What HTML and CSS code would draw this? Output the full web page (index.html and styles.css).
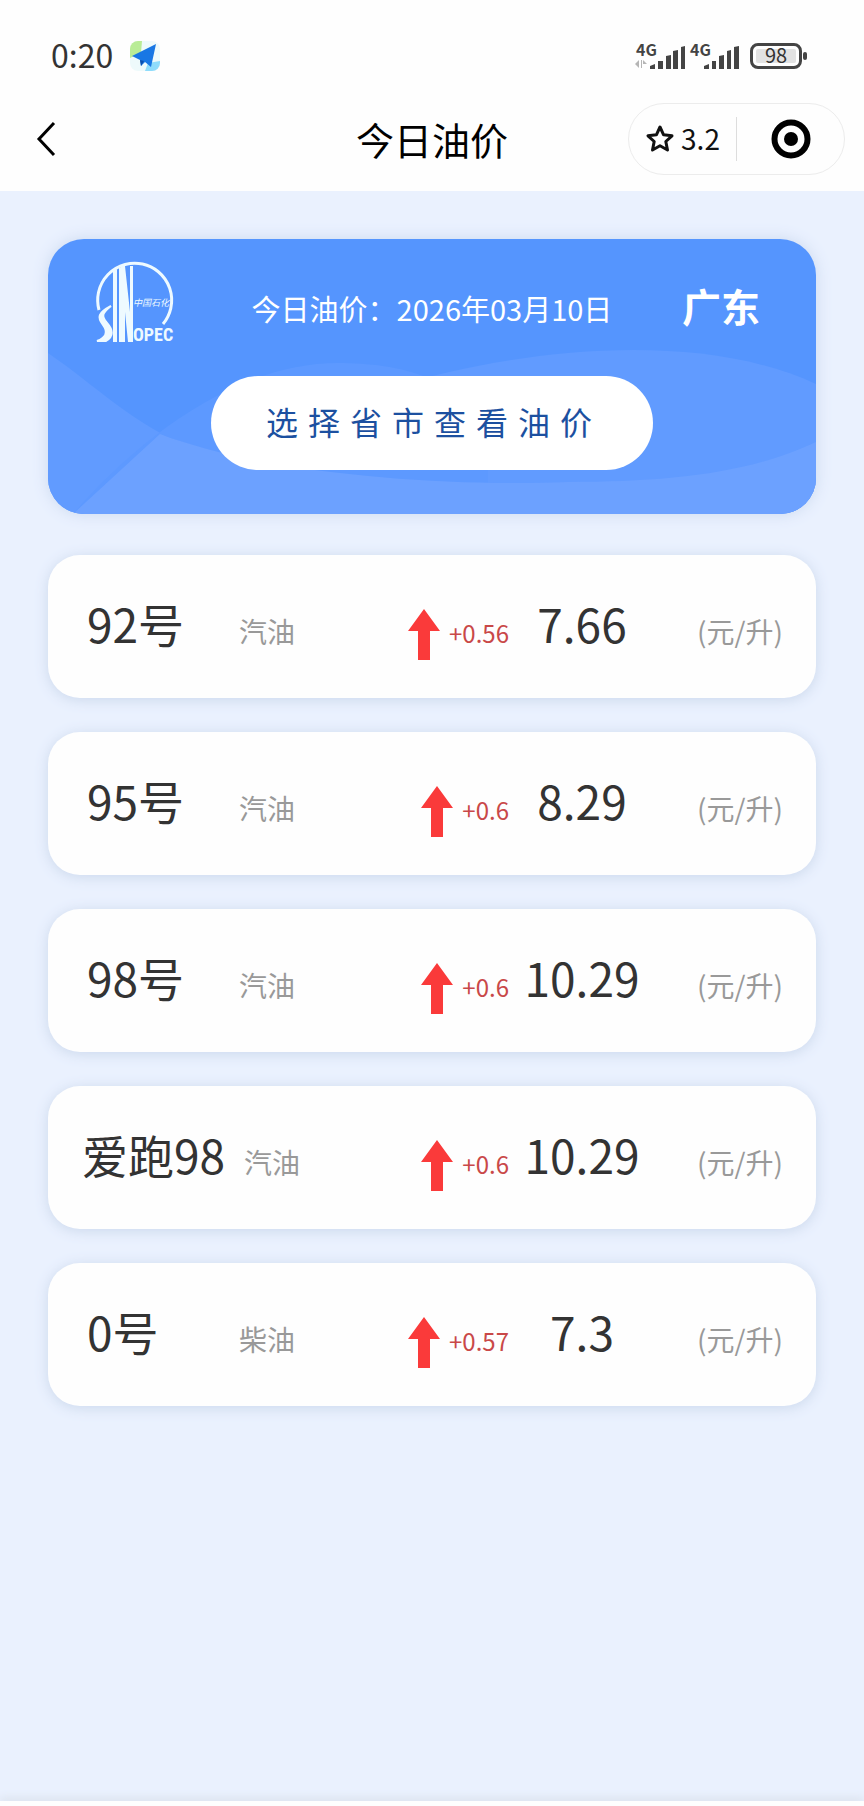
FILE: index.html
```html
<!DOCTYPE html>
<html lang="zh-CN">
<head>
<meta charset="utf-8">
<meta name="viewport" content="width=device-width, initial-scale=1">
<title>今日油价</title>
<link rel="stylesheet" href="styles.css">
</head>
<body>
<header class="top">
  <div class="status">
    <div class="status-left">
      <span class="clock">0:20</span>
      <svg class="app-icon" viewBox="0 0 32 32" aria-hidden="true">
        <rect x="1" y="1" width="30" height="30" rx="8" fill="#eefafb"/>
        <path d="M9 1h4L12 13 1 18V9a8 8 0 0 1 8-8z" fill="#b9ec96"/>
        <path d="M16 31l3-8 12-2v2a8 8 0 0 1-8 8z" fill="#8fdcfb"/>
        <path d="M27 4L3 16l8 4 1 6 4-4 6 5z" fill="#1877e4"/>
        <path d="M11 20l1 6 3-5z" fill="#0b4fae"/>
      </svg>
    </div>
    <div class="status-right">
      <svg class="signal" viewBox="0 0 52 30" aria-label="4G">
        <text x="1" y="15" class="net">4G</text>
        <path d="M4 19v8l-4-4zM6 19h1v8h-1zM8 19l4 4h-4z" fill="#b5b5b5"/>
        <path d="M15 28v-3l5-2v5zM23 20h5v8h-5zM31 15l5-1v14h-5zM38 10l5-1v19h-5zM46 6l4-1v23h-4z" fill="#444"/>
      </svg>
      <svg class="signal" viewBox="0 0 52 30" aria-label="4G">
        <text x="1" y="15" class="net">4G</text>
        <path d="M15 28v-3l5-2v5zM23 20h4v8h-4zM30 15l5-1v14h-5zM38 10l4-1v19h-4zM45 6l5-1v23h-5z" fill="#444"/>
      </svg>
      <span class="battery"><span class="battery-level">98</span></span>
    </div>
  </div>
  <nav class="nav">
    <button class="back" type="button" aria-label="返回">
      <svg viewBox="0 0 20 36"><path d="M18 2L3 18l15 16" fill="none" stroke="#000" stroke-width="3"/></svg>
    </button>
    <h1 class="title">今日油价</h1>
    <div class="capsule">
      <button class="rate" type="button">
        <svg viewBox="0 0 30 30" aria-hidden="true"><path d="M15 3l3.600 7.800 8.400 1-6.200 5.700 1.700 8.500L15 21.800 7.500 26l1.700-8.500L3 11.800l8.400-1z" fill="none" stroke="#111" stroke-width="3" stroke-linejoin="round"/></svg>
        <span>3.2</span>
      </button>
      <button class="close" type="button" aria-label="关闭">
        <svg viewBox="0 0 40 40"><circle cx="20" cy="20" r="16.500" fill="none" stroke="#000" stroke-width="6"/><circle cx="20" cy="20" r="7" fill="#000"/></svg>
      </button>
    </div>
  </nav>
</header>

<main class="content">
  <section class="hero">
    <svg class="hero-waves" viewBox="0 0 768 275" preserveAspectRatio="none" aria-hidden="true">
      <path d="M0 114C50 148 82 184 150 212C260 252 420 252 520 246C620 246 710 232 768 202V275H0z" fill="#619bff"/>
      <path d="M345 148C470 110 650 90 768 145V203C700 236 610 246 520 246H345z" fill="#619bff"/>
      <path d="M25 275C85 205 185 124 290 124C350 124 420 138 440 200V246C330 240 220 236 112 195z" fill="#5d99ff"/>
      <path d="M25 275L112 195C220 236 400 248 520 243C620 243 700 235 768 203V275z" fill="#6ca1ff"/>
    </svg>
    <div class="hero-head">
      <svg class="logo" viewBox="0 0 78 82" role="img" aria-label="中国石化 SINOPEC">
        <path d="M3 48A37 37 0 1 1 67 62" fill="none" stroke="#eefaff" stroke-width="3"/>
        <path d="M17 9l4-2v73h-4zM23 6l4-2v76h-4z" fill="#eefaff"/>
        <path d="M29 4l5 46V4h3v76h-5l-3-30v30h-2V4z" fill="#eefaff"/>
        <path d="M15 44C2 51 1 55 7 63S9 76 1 79h9c8-5 7-11 1-18S6 51 15 44z" fill="#eefaff" stroke="#eefaff" stroke-width="2"/>
        <text x="37" y="44" class="logo-cn">中国石化</text>
        <text x="37" y="79" class="logo-en">OPEC</text>
      </svg>
      <p class="date">今日油价：2026年03月10日</p>
      <strong class="province">广东</strong>
    </div>
    <button class="pick" type="button">选择省市查看油价</button>
  </section>

  <ul class="prices">
    <li class="row">
      <span class="fuel">92号</span><span class="kind">汽油</span>
      <span class="change"><svg class="arrow" viewBox="0 0 32 51" aria-hidden="true"><path d="M16 0l16 22H22v29H10V22H0z"/></svg>+0.56</span>
      <span class="price">7.66</span><span class="unit">(元/升)</span>
    </li>
    <li class="row">
      <span class="fuel">95号</span><span class="kind">汽油</span>
      <span class="change"><svg class="arrow" viewBox="0 0 32 51" aria-hidden="true"><path d="M16 0l16 22H22v29H10V22H0z"/></svg>+0.6</span>
      <span class="price">8.29</span><span class="unit">(元/升)</span>
    </li>
    <li class="row">
      <span class="fuel">98号</span><span class="kind">汽油</span>
      <span class="change"><svg class="arrow" viewBox="0 0 32 51" aria-hidden="true"><path d="M16 0l16 22H22v29H10V22H0z"/></svg>+0.6</span>
      <span class="price">10.29</span><span class="unit">(元/升)</span>
    </li>
    <li class="row">
      <span class="fuel fuel-long">爱跑98</span><span class="kind">汽油</span>
      <span class="change"><svg class="arrow" viewBox="0 0 32 51" aria-hidden="true"><path d="M16 0l16 22H22v29H10V22H0z"/></svg>+0.6</span>
      <span class="price">10.29</span><span class="unit">(元/升)</span>
    </li>
    <li class="row">
      <span class="fuel">0号</span><span class="kind">柴油</span>
      <span class="change"><svg class="arrow" viewBox="0 0 32 51" aria-hidden="true"><path d="M16 0l16 22H22v29H10V22H0z"/></svg>+0.57</span>
      <span class="price">7.3</span><span class="unit">(元/升)</span>
    </li>
  </ul>
</main>
<footer class="sheet"></footer>
</body>
</html>
```

FILE: styles.css
```css
* {
  box-sizing: border-box;
}

body {
  margin: 0;
  min-height: 100vh;
  display: flex;
  flex-direction: column;
  background: #eaf1fe;
  color: #333;
  font-family: "Noto Sans CJK SC", "Noto Sans", sans-serif;
}

button {
  border: 0;
  padding: 0;
  background: none;
  color: inherit;
  font: inherit;
  cursor: pointer;
}

svg {
  display: block;
}

.top {
  background: #fefefe;
}

.status {
  display: flex;
  justify-content: space-between;
  align-items: center;
  height: 87px;
  padding: 24px 56px 0 51px;
}

.status-left,
.status-right {
  display: flex;
  align-items: center;
}

.status-left {
  gap: 16px;
}

.clock {
  padding-bottom: 4px;
  font-size: 32px;
  line-height: 32px;
  color: #333;
}

.app-icon {
  width: 32px;
  height: 32px;
}

.signal {
  width: 52px;
  height: 30px;
  margin-right: 2px;
  overflow: visible;
}

.net {
  font: 700 16px "Noto Sans CJK SC", sans-serif;
  fill: #444;
}

.battery {
  position: relative;
  display: flex;
  width: 52px;
  height: 26px;
  margin: 0 6px 0 7px;
  padding: 3px;
  border: 3px solid #444;
  border-radius: 8px;
}

.battery::after {
  content: "";
  position: absolute;
  right: -8px;
  top: 6px;
  width: 4px;
  height: 8px;
  border-radius: 2px;
  background: #444;
}

.battery-level {
  flex: 1;
  border-radius: 2px;
  background: #e2e2e2;
  font-size: 20px;
  line-height: 12px;
  text-align: center;
}

.nav {
  display: grid;
  grid-template-columns: 1fr auto 1fr;
  align-items: center;
  height: 104px;
  padding: 0 19px;
}

.back {
  justify-self: start;
  padding-left: 17px;
}

.back svg {
  width: 20px;
  height: 36px;
}

.title {
  margin: 0;
  font-size: 38px;
  line-height: 48px;
  font-weight: 400;
  color: #000;
}

.capsule {
  justify-self: end;
  display: flex;
  align-items: center;
  width: 217px;
  height: 72px;
  border: 1px solid #ececec;
  border-radius: 36px;
}

.rate,
.close {
  flex: 1;
  display: flex;
  align-items: center;
  justify-content: center;
  height: 44px;
}

.rate {
  gap: 6px;
  border-right: 1px solid #ddd;
  font-size: 28px;
  line-height: 32px;
  color: #111;
}

.rate svg {
  width: 30px;
  height: 30px;
}

.rate span {
  padding-bottom: 2px;
}

.close svg {
  width: 40px;
  height: 40px;
}

.content {
  flex: 1;
  padding: 48px 48px 40px;
}

.hero {
  position: relative;
  isolation: isolate;
  overflow: hidden;
  padding: 23px 48px 44px;
  border-radius: 36px;
  background: #5595fe;
  box-shadow: 0 0 16px #cbd9f0;
  color: #fff;
}

.hero-waves {
  position: absolute;
  inset: 0;
  z-index: -1;
  width: 100%;
  height: 100%;
}

.hero-head {
  display: grid;
  grid-template-columns: 1fr auto 1fr;
  align-items: center;
  margin-bottom: 32px;
}

.logo {
  width: 78px;
  height: 82px;
  overflow: visible;
}

.logo-cn {
  font: italic 9px "Noto Sans CJK SC", sans-serif;
  fill: #eefaff;
}

.logo-en {
  font: 700 18px "Liberation Sans Narrow", "Roboto Condensed", sans-serif;
  fill: #eefaff;
}

.date {
  margin: 0;
  padding-top: 10px;
  font-size: 29px;
  line-height: 40px;
}

.province {
  justify-self: end;
  padding: 4px 8px 0 0;
  font-size: 39px;
  line-height: 48px;
}

.pick {
  display: block;
  margin: 0 auto;
  padding: 0 51px 4px 55px;
  border-radius: 47px;
  background: #fff;
  color: #1c50a0;
  font-size: 32px;
  line-height: 90px;
  letter-spacing: 10px;
}

.prices {
  display: flex;
  flex-direction: column;
  gap: 34px;
  margin: 41px 0 0;
  padding: 0;
  list-style: none;
}

.row {
  display: flex;
  align-items: baseline;
  min-height: 143px;
  padding: 34px 33px 0 34px;
  border-radius: 32px;
  background: #fefefe;
  box-shadow: 0 2px 14px #cbd8ec;
}

.fuel,
.price {
  font-size: 46px;
  line-height: 68px;
}

.fuel {
  min-width: 157px;
  padding-left: 5px;
}

.fuel-long {
  min-width: 162px;
  padding-left: 0;
}

.kind,
.unit {
  font-size: 28px;
  line-height: 40px;
  color: #999;
}

.change {
  margin-left: auto;
  font-size: 24px;
  line-height: 32px;
  color: #c94848;
}

.arrow {
  display: inline-block;
  width: 32px;
  height: 51px;
  margin-right: 9px;
  vertical-align: -17px;
  fill: #fa3a3a;
}

.price {
  width: 146px;
  text-align: center;
}

.unit {
  width: 128px;
  text-align: right;
}

.sheet {
  height: 5px;
  background: #fefefe;
  box-shadow: 0 -2px 10px #d3dae4;
}
```
